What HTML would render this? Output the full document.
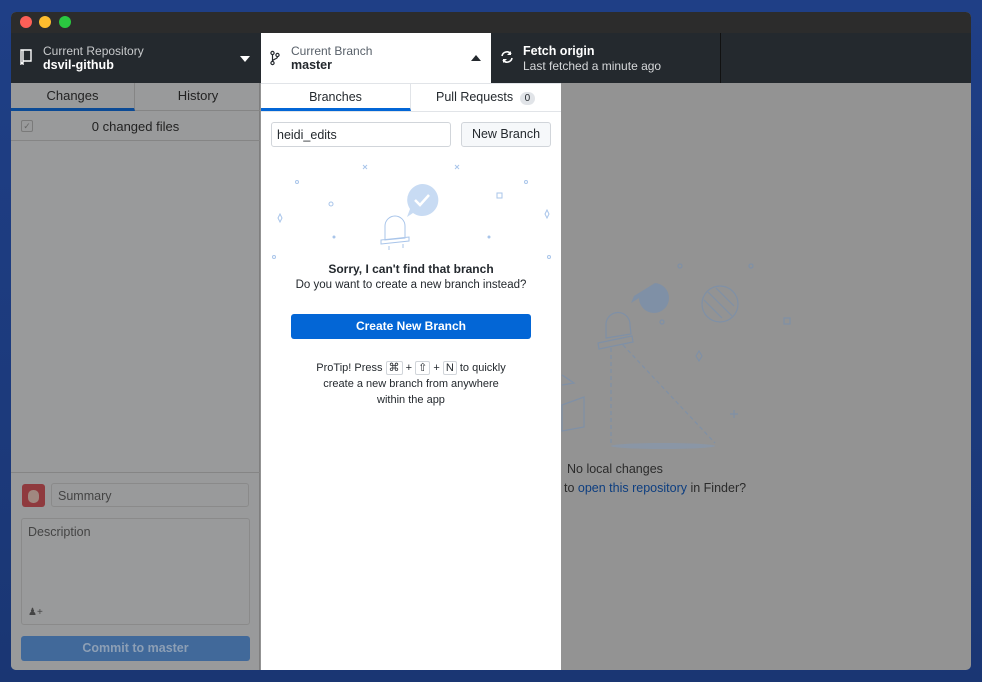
<!DOCTYPE html>
<html><head><meta charset="utf-8"><style>
*{box-sizing:border-box;margin:0;padding:0}
body{width:982px;height:682px;overflow:hidden;background:linear-gradient(180deg,#1f3f86 0%,#1c3a7c 60%,#1a3673 100%);font-family:"Liberation Sans",sans-serif;position:relative}
.abs{position:absolute}
.win{left:11px;top:12px;width:960px;height:658px;background:#939393;border-radius:5px;overflow:hidden}
.title{left:0;top:0;width:960px;height:21px;background:#2c2c2c}
.dot{top:4px;width:12px;height:12px;border-radius:50%}
.hdr{left:0;top:21px;width:960px;height:50px;background:#24292e;color:#fff}
.t1{font-size:12px;color:#c8cacc}
.t2{font-size:12.5px;font-weight:bold}
.side{left:0;top:71px;width:249px;height:587px;background:#999a9b;border-right:1px solid #7f7f7f}
.pop{left:250px;top:71px;width:300px;height:587px;background:#fff}
.bh{left:250px;top:21px;width:230px;height:50px;background:#fff}
</style></head><body>
<div class="abs win">
 <div class="abs title">
  <div class="abs dot" style="left:9px;background:#fc5f57"></div>
  <div class="abs dot" style="left:28px;background:#fdbc2e"></div>
  <div class="abs dot" style="left:48px;background:#2ac840"></div>
 </div>
 <div class="abs hdr">
  <svg class="abs" style="left:9px;top:16px" width="12" height="16" viewBox="0 0 12 16"><path d="M1 1h10v11H3v3l-1-1-1 1z M3 1v11" fill="none" stroke="#fff" stroke-width="1.4"/></svg>
  <div class="abs t1" style="left:32px;top:11px">Current Repository</div>
  <div class="abs t2" style="left:32px;top:25px">dsvil-github</div>
  <div class="abs" style="left:229px;top:23px;border-left:5px solid transparent;border-right:5px solid transparent;border-top:6px solid #fff"></div>
  <div class="abs" style="left:480px;top:0;width:230px;height:50px;border-right:1px solid #111"></div>
  <svg class="abs" style="left:489px;top:17px" width="14" height="14" viewBox="0 0 14 14"><path d="M2 6a5 5 0 0 1 9-2M12 8a5 5 0 0 1-9 2" fill="none" stroke="#fff" stroke-width="1.6"/><path d="M11 1v4H7z M3 13V9h4z" fill="#fff"/></svg>
  <div class="abs t2" style="left:512px;top:11px">Fetch origin</div>
  <div class="abs t1" style="left:512px;top:26px;color:#d6d8da">Last fetched a minute ago</div>
 </div>
 <div class="abs side">
  <div class="abs" style="left:0;top:0;width:249px;height:28px;border-bottom:1px solid #858585"></div>
  <div class="abs" style="left:0;top:0;width:124px;height:28px;border-right:1px solid #858585;border-bottom:3px solid #0b4a95;text-align:center;font-size:13px;line-height:26px;color:#222">Changes</div>
  <div class="abs" style="left:125px;top:0;width:124px;height:28px;text-align:center;font-size:13px;line-height:26px;color:#222">History</div>
  <div class="abs" style="left:0;top:29px;width:249px;height:29px;border-bottom:1px solid #858585"></div>
  <div class="abs" style="left:10px;top:37px;width:12px;height:12px;border:1px solid #7a7a7a;border-radius:2px;font-size:9px;color:#666;line-height:10px;text-align:center">✓</div>
  <div class="abs" style="left:0;top:36px;width:249px;text-align:center;font-size:13px;color:#222">0 changed files</div>
  <div class="abs" style="left:0;top:389px;width:249px;border-top:1px solid #858585"></div>
  <div class="abs" style="left:11px;top:401px;width:23px;height:23px;border-radius:3px;background:#8f3a3e"><div class="abs" style="left:6px;top:6px;width:11px;height:13px;background:#a08880;border-radius:5px"></div></div>
  <div class="abs" style="left:40px;top:400px;width:198px;height:24px;border:1px solid #8a8a8a;border-radius:3px;font-size:12.5px;color:#444;padding:5px 6px">Summary</div>
  <div class="abs" style="left:10px;top:435px;width:229px;height:107px;border:1px solid #8a8a8a;border-radius:3px;font-size:12.5px;color:#444;padding:6px 6px">Description<div class="abs" style="left:6px;top:88px;font-size:10px;color:#444">&#9823;+</div></div>
  <div class="abs" style="left:10px;top:553px;width:229px;height:25px;background:#41699a;border-radius:3px;text-align:center;font-size:12.5px;font-weight:bold;color:#8d9fb5;line-height:25px">Commit to master</div>
 </div>
 <div class="abs bh">
  <svg class="abs" style="left:9px;top:17px" width="10" height="16" viewBox="0 0 10 16"><circle cx="2.5" cy="3" r="1.6" fill="none" stroke="#24292e" stroke-width="1.2"/><circle cx="2.5" cy="13" r="1.6" fill="none" stroke="#24292e" stroke-width="1.2"/><circle cx="7.5" cy="5" r="1.6" fill="none" stroke="#24292e" stroke-width="1.2"/><path d="M2.5 4.6v6.8M7.5 6.6c0 3-5 2-5 5" fill="none" stroke="#24292e" stroke-width="1.2"/></svg>
  <div class="abs" style="left:30px;top:11px;font-size:12px;color:#586069">Current Branch</div>
  <div class="abs" style="left:30px;top:25px;font-size:12.5px;font-weight:bold;color:#24292e">master</div>
  <div class="abs" style="left:210px;top:22px;border-left:5px solid transparent;border-right:5px solid transparent;border-bottom:6px solid #24292e"></div>
 </div>
 <div class="abs pop">
  <div class="abs" style="left:0;top:0;width:300px;height:29px;border-top:1px solid #e1e4e8;border-bottom:1px solid #e1e4e8"></div>
  <div class="abs" style="left:0;top:1px;width:150px;height:27px;border-bottom:3px solid #0366d6;border-right:1px solid #e1e4e8;text-align:center;font-size:12.5px;line-height:26px;color:#24292e">Branches</div>
  <div class="abs" style="left:175px;top:7px;font-size:12.5px;color:#24292e">Pull Requests <span style="display:inline-block;background:#e1e4e8;border-radius:8px;font-size:10px;padding:1px 5px;margin-left:3px">0</span></div>
  <div class="abs" style="left:10px;top:39px;width:180px;height:25px;border:1px solid #d1d5da;border-radius:3px;font-size:12.5px;color:#24292e;padding:5px 5px">heidi_edits</div>
  <div class="abs" style="left:200px;top:39px;width:90px;height:25px;border:1px solid #d1d5da;background:#f6f8fa;border-radius:3px;font-size:12.5px;color:#24292e;text-align:center;line-height:23px">New Branch</div>
  <svg class="abs" style="left:0;top:75px" width="300" height="110" viewBox="0 0 300 110" fill="none" stroke="#a9c5ea" stroke-width="1">
   <path d="M102 7l4 4M106 7l-4 4M194 7l4 4M198 7l-4 4"/>
   <circle cx="36" cy="24" r="1.5"/><circle cx="265" cy="24" r="1.5"/><circle cx="13" cy="99" r="1.5"/><circle cx="288" cy="99" r="1.5"/>
   <circle cx="70" cy="46" r="2"/><rect x="236" y="35" width="5" height="5"/>
   <path d="M17 60l2-4 2 4-2 4zM284 56l2-4 2 4-2 4z"/>
   <circle cx="73" cy="79" r="1" fill="#a9c5ea"/><circle cx="228" cy="79" r="1" fill="#a9c5ea"/>
   <path d="M124 82v-14a10 10 0 0 1 20 0v12l-20 2zM120 82l28-3v4l-28 3z M128 88v4M142 86v4"/>
  </svg>
  <svg class="abs" style="left:144px;top:100px" width="34" height="36" viewBox="0 0 34 36"><path d="M17 1a16 16 0 1 1-9 29l-6 4 3-8A16 16 0 0 1 17 1z" fill="#c8dbf3"/><path d="M10 17l5 5 9-10" fill="none" stroke="#fff" stroke-width="2.5"/></svg>
  <div class="abs" style="left:0;top:179px;width:300px;text-align:center;font-size:12px;font-weight:bold;color:#24292e">Sorry, I can't find that branch</div>
  <div class="abs" style="left:0;top:196px;width:300px;text-align:center;font-size:11.5px;color:#24292e">Do you want to create a new branch instead?</div>
  <div class="abs" style="left:30px;top:231px;width:240px;height:25px;background:#0366d6;border-radius:3px;text-align:center;font-size:12px;font-weight:bold;color:#fff;line-height:25px">Create New Branch</div>
  <div class="abs" style="left:0;top:277px;width:300px;text-align:center;font-size:11px;color:#24292e;line-height:16px">ProTip! Press <span style="border:1px solid #d1d5da;border-radius:2px;padding:0 2px">⌘</span> + <span style="border:1px solid #d1d5da;border-radius:2px;padding:0 2px">⇧</span> + <span style="border:1px solid #d1d5da;border-radius:2px;padding:0 2px">N</span> to quickly<br>create a new branch from anywhere<br>within the app</div>
 </div>
 <svg class="abs" style="left:550px;top:240px" width="240" height="210" viewBox="561 252 240 210" fill="none" stroke="#7f90a6" stroke-width="1.2">
  <circle cx="680" cy="266" r="2"/><circle cx="751" cy="266" r="2"/><circle cx="662" cy="322" r="2"/>
  <circle cx="720" cy="304" r="18"/><path d="M708 292l24 24M704 300l18 18M716 288l18 18"/>
  <path d="M655 283a15 15 0 1 1-16 15l-8 5 3-7" fill="#7f90a6" stroke="none"/>
  <path d="M606 338v-14a12 12 0 0 1 24 1l1 9z M598 343l34-7 1 6-34 7z"/>
  <path d="M611 348v98 M623 345l92 98" stroke-dasharray="4 3"/>
  <path d="M784 318h6v6h-6z M696 356l3-5 3 5-3 5z M730 414h8M734 410v8"/>
  <ellipse cx="663" cy="446" rx="52" ry="3" fill="#8a96a6" stroke="none"/>
  <path d="M562 405l22-8v30l-22 4z M562 375l12 8-12 2"/>
 </svg>
 <div class="abs" style="left:556px;top:450px;font-size:12.5px;color:#2b2b2b">No local changes</div>
 <div class="abs" style="left:553px;top:469px;font-size:12.5px;color:#2b2b2b">to <span style="color:#0d3e80">open this repository</span> in Finder?</div>
</div>
</body></html>
